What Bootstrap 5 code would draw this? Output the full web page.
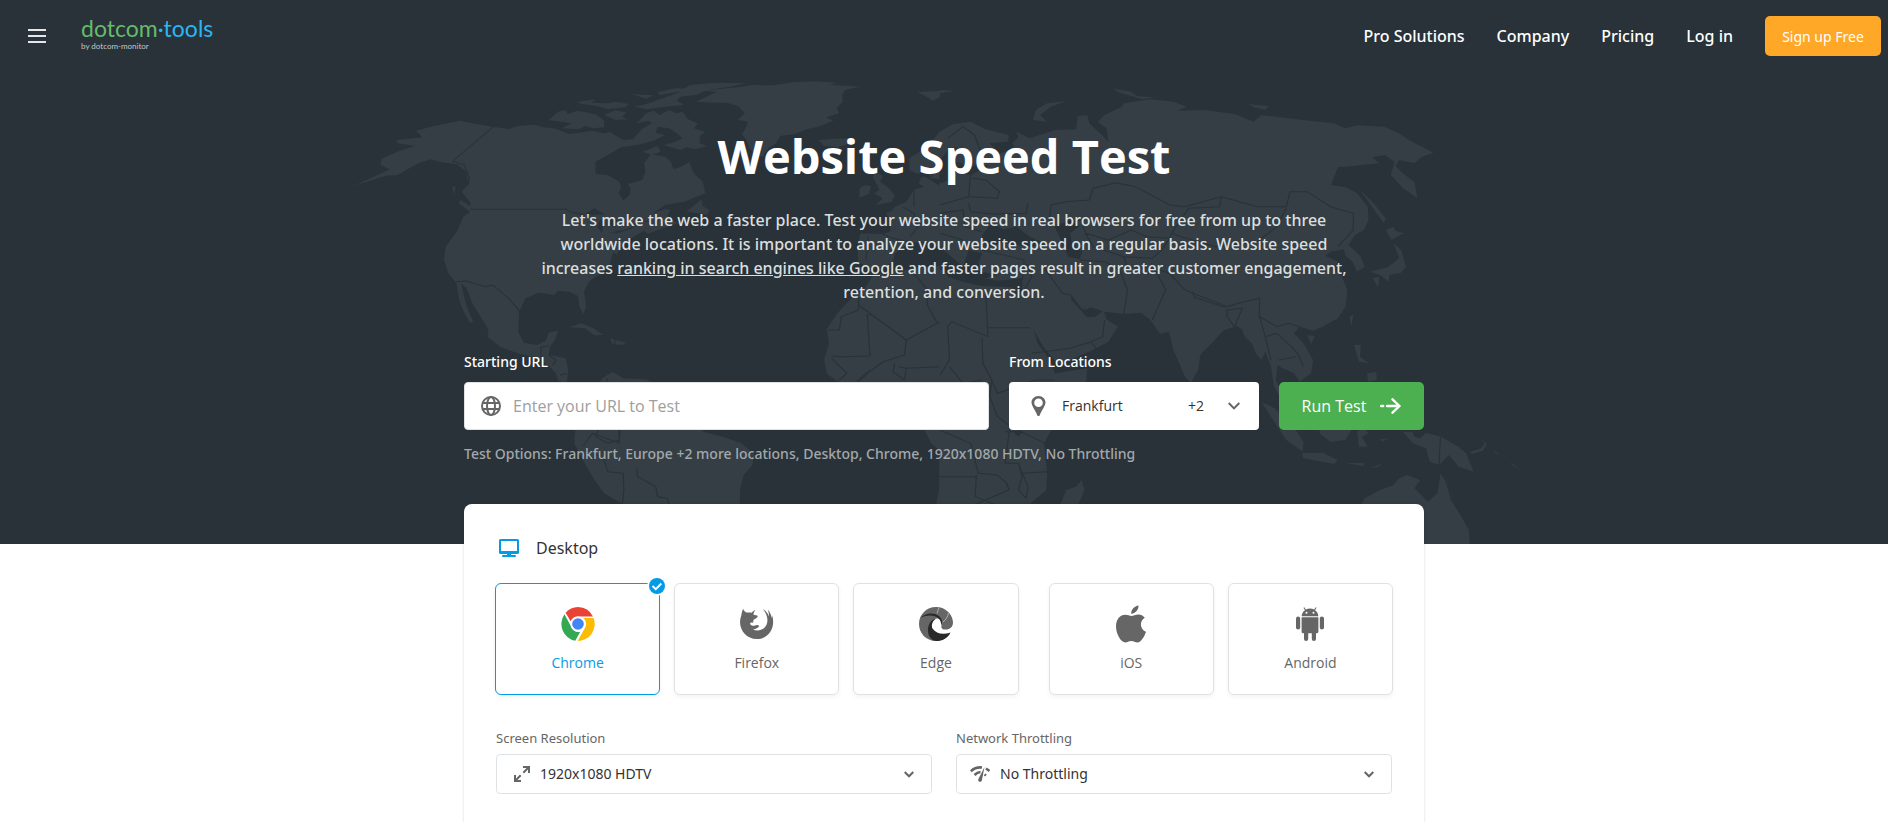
<!DOCTYPE html>
<html lang="en">
<head>
<meta charset="utf-8">
<meta name="viewport" content="width=device-width, initial-scale=1">
<title>Website Speed Test</title>
<link rel="stylesheet" href="https://cdn.jsdelivr.net/npm/bootstrap@5.3.0/dist/css/bootstrap.min.css">
<style>
  :root { --ink: #283238; --land: #343e44; --blue: #039be5; --grey: #666; --line: #dfe2e4; }
  body { font-family: "Open Sans", "Noto Sans", sans-serif; font-size: 14px; line-height: 20px; color: #333; background: #fff; overflow-x: hidden; }
  .topbar, .intro, .field-label, .summary, .panel h2, .opts { font-family: "Noto Sans", "Open Sans", sans-serif; }
  .topbar .nav-link, .intro, .field-label, .summary { font-weight: 500; }
  .hero { background: var(--ink); padding-bottom: 80px; }
  .world { width: 100%; height: 100%; pointer-events: none; }
  .world .land { fill: var(--land); }
  .world .sea { fill: var(--ink); }
  .world .frontier { fill: none; stroke: var(--ink); stroke-width: 3; stroke-linejoin: round; }
  .topbar { padding: 16px 7px 16px 28px; height: 72px; }
  .menu-btn { width: 18px; line-height: 0; color: #e4e6e7; }
  .brand { margin-left: 35px; padding-bottom: 4px; line-height: 24px; font-family: Lato, sans-serif; font-size: 23px; color: #66bb6a; }
  .brand .tools { color: #29b6f6; }
  .brand small { display: block; font-size: 8px; line-height: 12px; color: #c3c7c9; }
  .topbar .nav-link { color: #fff; font-size: 16px; padding: 0; }
  .btn-signup { background: #ffa726; color: #fff; font-size: 14px; height: 40px; width: 116px; padding: 0; border-radius: 5px; }
  .page-col { width: 960px; max-width: 100%; margin: 0 auto; }
  .hero h1 { color: #fff; font-size: 47px; line-height: 64px; font-weight: 700; margin: 52px 0 20px; }
  .intro { max-width: 820px; margin: 0 auto; font-size: 16px; line-height: 24px; color: #dcdedf; }
  .intro a { color: inherit; }
  .field-label { color: #fff; font-size: 14px; line-height: 20px; margin-bottom: 10px; }
  .url-form { margin-top: 48px; column-gap: 20px; }
  .url-box { height: 48px; border: 1px solid var(--line); border-radius: 4px; background: #fff; padding: 0 16px; gap: 12px; }
  .url-box input { border: 0; outline: 0; font-size: 16px; color: #333; min-width: 0; background: transparent; padding: 0; }
  .url-box input::placeholder { color: #9e9e9e; opacity: 1; }
  .loc-col { width: 250px; }
  .loc-btn { height: 48px; border: 0; border-radius: 4px; background: #fff; color: #333; padding: 0 19px 0 22px; }
  .run-btn { width: 145px; height: 48px; background: #4caf50; color: #fff; border: 0; border-radius: 5px; font-size: 16px; gap: 14px; padding: 0; }
  .summary { color: #a3a8ab; font-size: 14px; line-height: 20px; margin: 14px 0 0; }
  .panel { margin-top: -40px; position: relative; background: #fff; border-radius: 8px; padding: 31px; box-shadow: 0 0 3px rgba(40,50,56,.18); min-height: 340px; }
  .panel h2 { font-size: 16px; line-height: 26px; margin: 0; color: #333; font-weight: 400; gap: 17px; }
  .tiles { margin-top: 22px; gap: 14px; }
  .tile { height: 112px; border: 1px solid var(--line); border-radius: 6px; box-shadow: 0 2px 4px rgba(40,50,56,.06); color: var(--grey); gap: 11px; padding-top: 1px; cursor: pointer; background: #fff; }
  .tile .icon { height: 36px; }
  .tile .tick { display: none; position: absolute; width: 20px; height: 20px; top: -8px; right: -8px; }
  .btn-check:checked + .tile { border-color: var(--blue); color: var(--blue); }
  .btn-check:checked + .tile .tick { display: block; }
  .mobile { margin-left: 16px; }
  .opts { margin-top: 33px; gap: 24px; padding: 0 1px; }
  .opts label { font-size: 13px; line-height: 20px; color: var(--grey); margin-bottom: 6px; }
  .pick { height: 40px; border: 1px solid var(--line); border-radius: 4px; padding: 0 13px; gap: 10px; }
  .pick select { appearance: none; border: 0; outline: 0; background: transparent; color: #333; font-size: 14px; padding: 0; }
</style>
</head>
<body>
<header class="hero position-relative">
  <svg class="world position-absolute top-0 start-0" viewBox="0 0 1888 544" preserveAspectRatio="xMidYMin slice" aria-hidden="true">
    <!-- Western half -->
    <g transform="translate(340 60) scale(.38265 .33333)">
      <path class="land" d="M930 125L985 95 940 92 1040 82 1080 75 1130 76 1190 66 1240 64 1300 68 1280 74 1360 80 1320 90 1312 105 1314 125 1298 145 1305 160 1270 172 1290 182 1250 200 1220 208 1190 222 1150 228 1140 250 1120 265 1105 290 1085 285 1070 265 1062 240 1050 222 1060 205 1066 185 1040 180 1058 160 1040 138 1010 128 970 128Z"/>
      <path class="land" d="M1250 240L1290 236 1330 235 1335 250 1300 262 1265 258ZM1508 96L1568 92V112L1550 122 1530 108Z"/>
      <path class="land" d="M35 378L85 352 130 328 105 315 110 295 150 275 195 258 150 250 148 240 215 232 198 212 245 198 280 190 315 182 345 190 400 200 440 207 465 198 510 194 530 202 560 205 600 222 660 212 690 220 705 216 740 240 765 238 790 206 815 190 832 196 825 218 850 225 820 242 780 254 735 262 700 285 668 305 668 342 700 345 730 365 735 380 728 400 740 420 755 408 760 388 752 372 790 360 798 335 795 308 812 283 850 290 865 305 872 328 895 318 912 306 925 340 948 365 955 400 900 425 850 435 815 462 850 446 864 450 855 468 880 488 902 484 850 502 805 522 795 512 760 535 735 560 722 585 715 575 705 612 680 642 650 665 638 695 643 740 636 763 625 738 622 708 600 695 570 692 560 705 520 698 485 715 468 755 466 815 480 848 515 855 538 842 545 818 570 812 562 840 548 862 546 885 590 895 597 930 592 970 570 962 565 940 545 918 520 895 470 882 420 862 385 830 388 810 365 765 348 735 330 685 316 670 330 735 348 785 340 790 325 760 312 722 304 670 283 640 272 600 276 560 305 515 322 470 340 455 310 430 315 420 340 438 342 430 318 395 335 372 330 335 305 312 270 308 238 298 205 310 150 345 120 347Z"/>
      <path class="land" d="M545 180L570 155 590 150 595 162 620 152 650 158 670 165 690 180 690 202 660 205 640 198 625 208 580 205 605 190ZM560 165L545 175M620 125L670 118 655 128 700 130 720 125 755 132 745 142 700 148 670 138 630 132ZM690 165L720 150 750 158 735 170 755 178 720 180ZM768 140L800 132 835 118 880 100 915 75 980 68 1060 70 1020 80 960 90 930 105 890 110 880 122 900 135 840 142 800 148ZM830 96L880 84 910 88 870 98 835 106ZM760 102L820 106 800 116ZM775 190L800 160 820 152 835 165 860 150 880 160 895 155 910 178 935 190 925 205 955 215 940 228 940 250 960 258 930 268 905 262 890 270 845 255 870 248 895 235 880 220 860 205 830 200 805 182ZM790 275L830 258 838 275 815 285ZM905 455L945 418 948 438 966 450 960 465 935 460Z"/>
      <path class="land" d="M598 802L630 790 660 803 688 825 665 826 640 805ZM705 835L748 848 738 855 712 852ZM652 852L670 855M765 852L778 856M95 268L105 272M82 310L96 305ZM293 382L302 378 298 405Z"/>
      <path class="land" d="M670 985L685 955 712 935 740 955 800 958 850 990 900 1060 950 1115 1000 1130 1050 1150 1083 1185 1078 1215 1055 1245 1045 1290 1045 1335V1360H745L735 1330 690 1300 665 1260 630 1190 612 1150 615 1110 640 1060Z"/>
      <path class="land" d="M1357 385L1372 375 1388 378 1382 402 1358 413ZM1392 350L1402 335 1418 348 1412 365 1430 380 1450 405 1443 425 1400 436 1418 415 1396 400 1410 390Z"/>
      <path class="land" d="M1568 212L1545 248 1515 275 1488 295 1488 330 1510 343 1530 325 1545 355 1568 358V378L1530 350 1520 350 1512 370 1525 380 1500 390 1480 425 1450 440 1440 455 1425 458 1440 480 1438 515 1418 522 1360 520 1352 560 1355 608 1385 622 1420 622 1445 605 1450 580 1485 550 1500 548 1540 545 1568 565ZM1568 618L1500 625 1440 640 1395 640 1370 690 1340 710 1300 760 1272 808 1278 850 1265 900 1272 940 1300 965 1340 1010 1400 1030 1480 1020 1520 1050 1530 1115 1545 1150 1568 1172Z M1568 1270L1558 1332H1568Z"/>
      <path class="sea" d="M640 462L665 445 690 462 660 465ZM672 500L680 480 690 475 685 520ZM700 475L725 480 720 500 705 495ZM700 520L735 510 730 516Z"/>
      <path class="frontier" d="M403 198L295 303 325 315 338 355 335 375M340 448H592L600 455 640 465M720 520L760 505 780 482 810 485M303 665L330 663 380 680 400 675 430 705 445 720 472 757M525 890L525 862 545 858M545 885L565 900 555 915M592 940L575 945M718 835V855M700 955L690 985 735 1010 730 1150 660 1120 635 1158M675 1110L668 1130 700 1150 730 1140 728 1112M665 1180L690 1200 700 1235 740 1240 742 1290 738 1332M775 1225L778 1250 825 1280 830 1310 855 1315 860 1332M1275 810H1305L1310 770 1355 750V710M1355 735L1480 840 1568 785M1378 765L1385 888 1310 890 1285 888M1375 765H1392M1480 840L1475 885 1420 905 1390 930 1355 965M1285 895L1325 940 1300 965M1450 910L1445 935 1475 960 1480 925 1568 920M1480 925L1460 920M1350 965L1385 930M1535 735V690L1500 640M1535 735L1560 788M1418 522L1445 535 1500 548M1380 530L1375 600M1470 440L1500 460 1510 500 1490 530M1500 390L1500 440M1545 350L1568 310"/>
    </g>
    <!-- Eastern half -->
    <g transform="translate(940 60) scale(.38265 .33333)">
      <path class="land" d="M-2 215L35 192 80 185 120 208 180 225 178 245 130 250 155 282 195 262 188 250 205 232 198 215 235 235 300 210 355 208 360 168 385 165 390 190 428 230 440 245 435 205 412 185 430 165 475 140 480 130 550 118 610 125 645 140 620 152 690 150 770 162 820 185 840 165 950 180 1030 190 1060 205 1090 196 1160 200 1200 220 1225 240 1262 262 1290 278 1260 290 1240 310 1200 300 1190 318 1215 345 1240 365 1248 415 1210 385 1178 345 1188 305 1162 285 1130 292 1148 310 1080 318 1040 322 1022 375 1060 382 1090 400 1118 440 1120 480 1108 510 1085 525 1068 555 1100 590 1110 620 1090 635 1078 605 1060 588 1055 568 1020 575 1008 588 1042 605 1025 625 1050 650 1065 690 1060 740 1040 775 1000 800 975 812 940 800 925 820 950 850 975 900 970 940 940 965 925 940 895 925 882 915 878 960 898 1010 930 1050 900 1040 872 975 865 920 850 875 840 900 825 880 815 850 795 828 790 808 775 798 740 812 710 850 680 885 675 930 655 968 640 950 610 870 598 815 575 822 550 780 525 758 480 762 430 755 395 742 375 752 340 700 345 722 385 772 405 770 428 752 435 778 465 800 440 845 400 870 340 900 305 915 295 895 270 860 240 800 205 740 200 720 215 690 215 655 150 662 115 655 100 610 110 580 75 570 60 620 30 590 0 560 -2 560Z"/>
      <path class="land" d="M-2 632L10 622 20 650 60 665 110 678 190 682 205 720 240 790 255 850 290 905 300 940 385 925 382 965 340 1040 290 1112 272 1150 280 1240 278 1290 235 1332V1350H-2Z"/>
      <path class="land" d="M315 1332L330 1290 355 1280 370 1260 378 1290 362 1332ZM243 180L250 150 280 130 330 123 290 140 262 165 280 185ZM450 85L500 95 515 108 560 112 530 118 470 98ZM805 132L860 138 850 150 820 142ZM0 90L40 92 0 100ZM165 88L190 87M1095 388L1130 425 1165 475 1160 490 1110 410ZM1165 510L1185 500 1190 512 1212 520 1180 540ZM1185 550L1205 570 1218 620 1205 638 1175 645 1172 665 1150 645 1125 635 1170 622 1200 595ZM1130 655L1148 650 1145 680ZM1070 770L1080 765 1075 800ZM960 825L980 828 970 852ZM1082 855L1100 855 1098 890 1120 910 1095 905ZM1115 940L1140 935 1142 960 1120 965ZM840 1025L875 1045 930 1110 950 1145 948 1175 905 1140 870 1080ZM945 1180L1000 1178 1040 1200 1030 1212 950 1195ZM990 1080L1080 1060 1075 1110 1060 1140 1020 1145 992 1120ZM1090 1115L1105 1100 1120 1120 1102 1130 1118 1160 1095 1160ZM1060 1210L1110 1208 1105 1218ZM1125 1225L1155 1210 1145 1222ZM1150 1138L1175 1135 1155 1145ZM1210 1115L1235 1115 1240 1130 1255 1135 1270 1118 1310 1130 1355 1160 1375 1180 1395 1235 1355 1220 1330 1185 1305 1215 1280 1205 1270 1165 1235 1150ZM1385 1175L1412 1166 1424 1150 1410 1132 1430 1152 1418 1172 1390 1182ZM1445 1163L1460 1185 1452 1180ZM1490 1205L1512 1225 1498 1218Z"/>
      <path class="land" d="M1095 1345L1110 1315 1150 1290 1185 1275 1200 1255 1220 1245 1255 1260 1240 1285 1275 1325 1300 1300 1308 1240 1322 1265 1335 1320 1360 1365 1382 1410 1385 1456H1100Z"/>
      <path class="sea" d="M110 525L135 490 165 508 200 500 235 530 280 555 230 560 165 548 120 560ZM300 500L340 480 365 498 340 520 345 550 372 575 365 598 335 590 320 550ZM0 300L25 265 45 262 35 300 70 318 130 315 80 345 40 335 30 360 -2 370ZM0 575L25 590 60 635 20 640ZM80 645L110 635 150 645 110 658ZM20 600L45 610 55 640ZM375 735L380 760 376 768ZM1030 375L1040 380ZM190 1112L215 1115 205 1130Z"/>
      <path class="frontier" d="M20 235L60 200 90 225 110 285 95 320M80 345L75 410 0 435M75 410L150 415 155 395 120 360 85 355M75 430L80 455 140 462 225 460 230 430M0 460L60 450 65 500 110 515M0 520L60 540M110 570L220 600 215 660M285 490L290 435 330 425 390 420 400 385 460 368 510 380 560 410 600 435 640 440 735 410 830 440 905 440 915 395 960 395 1020 440 1080 460 1080 510 1040 560M735 412L730 440 650 445 605 520 600 535 540 530 500 510 440 540 380 520 370 480 305 495M605 520L630 530 720 560 830 545 880 500 905 445M380 520L400 560 480 590 555 595 580 570 600 535M480 590L490 620 560 625 600 640M365 600L430 605 470 630 490 690 480 762M270 620L320 700 340 705M225 610L240 650 205 720M560 625L590 690 570 740 555 780M600 640L640 690 750 740 780 730 835 715 835 770 880 800 910 790 940 800M660 695L665 712 745 742M750 750L790 745 770 800 750 770ZM835 770L850 830 880 820 900 840 935 880 950 920M850 830L865 900M885 900L930 890M240 880L340 865 395 845 425 830 430 780M395 845L410 870M120 700L125 830M122 803H235M125 830L30 785 20 800 25 900 0 945M110 835L112 910 135 960 150 1000 250 960 300 960M25 920L60 970 110 960M135 960L130 1010 150 1070 185 1100 275 1150M0 1110L80 1150 100 1240 150 1245 175 1270 180 1290 95 1332M185 1080L170 1210 205 1210 215 1240 280 1235M205 1210L215 1250 205 1290 225 1315 230 1280 215 1240M95 1245L92 1310 140 1332M0 1250L95 1250M170 1115H200M1308 1130L1304 1215"/>
    </g>
  </svg>

  <nav class="topbar d-flex align-items-center position-relative">
    <button type="button" class="menu-btn btn border-0 p-0" aria-label="Menu">
      <svg width="18" height="14" viewBox="0 0 18 14" fill="none" stroke="currentColor" stroke-width="2"><path d="M0 1h18M0 7h18M0 13h18"/></svg>
    </button>
    <a class="brand text-decoration-none" href="#">dotcom<span class="tools">·tools</span><small>by dotcom-monitor</small></a>
    <div class="nav ms-auto align-items-center gap-4">
      <a class="nav-link" href="#">Pro Solutions</a>
      <a class="nav-link ms-2" href="#">Company</a>
      <a class="nav-link ms-2" href="#">Pricing</a>
      <a class="nav-link ms-2" href="#">Log in</a>
      <button type="button" class="btn btn-signup ms-2">Sign up Free</button>
    </div>
  </nav>

  <div class="page-col position-relative">
    <h1 class="text-center">Website Speed Test</h1>
    <p class="intro text-center">Let's make the web a faster place. Test your website speed in real browsers for free from up to three worldwide locations. It is important to analyze your website speed on a regular basis. Website speed increases <a href="#">ranking in search engines like Google</a> and faster pages result in greater customer engagement, retention, and conversion.</p>

    <form class="url-form d-flex align-items-end">
      <div class="flex-grow-1">
        <label class="field-label d-block" for="url">Starting URL</label>
        <div class="url-box d-flex align-items-center">
          <svg width="20" height="20" viewBox="0 0 20 20" fill="none" stroke="#666" stroke-width="2"><circle cx="10" cy="10" r="9"/><ellipse cx="10" cy="10" rx="4" ry="9"/><path d="M1.500 7h17M1.500 13h17"/></svg>
          <input class="flex-grow-1" id="url" type="text" placeholder="Enter your URL to Test">
        </div>
      </div>
      <div class="loc-col">
        <label class="field-label d-block" for="locations">From Locations</label>
        <button type="button" id="locations" class="loc-btn d-flex align-items-center w-100">
          <svg width="15" height="20" viewBox="0 0 15 20" fill="#666" fill-rule="evenodd"><path d="M7.500 0C3.300 0 .5 3 .5 6.500c0 3.500 4.200 8 5.600 12.500.3 1.300 2.500 1.300 2.800 0 1.400-4.500 5.600-9 5.600-12.500C14.500 3 11.700 0 7.500 0zm0 2.400a4.300 4.300 0 1 1 0 8.600 4.300 4.300 0 0 1 0-8.600z"/></svg>
          <span class="ms-3">Frankfurt</span>
          <span class="ms-auto me-4">+2</span>
          <svg width="12" height="8" viewBox="0 0 12 8" fill="none" stroke="#666" stroke-width="2"><path d="M.7 1L6 6.400 11.300 1"/></svg>
        </button>
      </div>
      <button type="submit" class="run-btn d-flex align-items-center justify-content-center">Run Test
        <svg width="21" height="16" viewBox="0 0 21 16" fill="none" stroke="#fff" stroke-width="2.400" stroke-linecap="round" stroke-linejoin="round"><path d="M1.200 8h2M7 8h12.500M12.500 1.300L19.500 8l-7 6.700"/></svg>
      </button>
    </form>
    <p class="summary">Test Options: Frankfurt, Europe +2 more locations, Desktop, Chrome, 1920x1080 HDTV, No Throttling</p>
  </div>
</header>

<main class="page-col">
  <section class="panel">
    <h2 class="d-flex align-items-center">
      <svg class="ms-1" width="20" height="18" viewBox="0 0 20 18"><path fill="#039be5" fill-rule="evenodd" d="M1.500 0h17A1.500 1.500 0 0 1 20 1.500v12a1.500 1.500 0 0 1-1.500 1.500H12v1h4a1 1 0 0 1 0 2H4a1 1 0 0 1 0-2h4v-1H1.500A1.500 1.500 0 0 1 0 13.500v-12A1.500 1.500 0 0 1 1.500 0zM2 2v10h16V2z"/></svg>
      Desktop
    </h2>
    <div class="tiles d-flex" role="radiogroup" aria-label="Browser">
      <div class="flex-fill w-100">
        <input class="btn-check" type="radio" name="browser" id="chrome" checked>
        <label class="tile position-relative d-flex flex-column align-items-center justify-content-center" for="chrome">
          <svg class="icon" width="34" viewBox="0 0 34 36"><path fill="#ea4335" d="M17 1a17 17 0 0 1 15 9.500H17a8 8 0 0 0-7.400 4.800L4.600 6.800A17 17 0 0 1 17 1z"/><path fill="#fbbc05" d="M32.600 12a17 17 0 0 1-16 23l7.200-12.700a8 8 0 0 0-1.300-10.300z"/><path fill="#34a853" d="M3.500 8.300l6 11.200a8 8 0 0 0 9.700 6.200L14.300 34.800A17 17 0 0 1 3.500 8.300z"/><circle cx="17" cy="18" r="7.500" fill="#fff"/><circle cx="17" cy="18" r="5.800" fill="#4285f4"/></svg>
          <span>Chrome</span>
          <svg class="tick" viewBox="0 0 20 20"><circle cx="10" cy="10" r="10" fill="#fff"/><circle cx="10" cy="10" r="8" fill="#039be5"/><path d="M5.500 10l3.300 3.200 5.500-5.700" fill="none" stroke="#fff" stroke-width="2"/></svg>
        </label>
      </div>
      <div class="flex-fill w-100">
        <input class="btn-check" type="radio" name="browser" id="firefox">
        <label class="tile d-flex flex-column align-items-center justify-content-center" for="firefox">
          <svg class="icon" width="34" viewBox="0 0 34 36" fill="#666"><path d="M3.200 3c.8 1.700 1.800 3 3.300 3.500 2-.2 3.500-.2 5 .3 1-1.200 2.500-2.300 4-2.600-1.300 1.300-2 2.800-2 4.600 1.500.5 3.700.6 4.300 1.200-.3 1.800-2.500 2.800-4.200 3.700-.6 1 0 2-.6 3-1.500-.5-2.600-.2-3 1.200 1.500 1.500 3 2.500 5 1.600 1.500-.7 3.300-.8 4.300.5-1.200 2-3.300 3-6.300 3.400 6 3 13.300-.5 14.300-7.400.6-5-1-8.500-4.300-13 3 2 5 4.500 5.900 7.500.2-2.500-.2-4.800-1.200-7 2.400 2.700 3.600 5.500 4 8.500.4-1 .4-2 .3-3C36 20 29.500 33 17 33 4 33-3 20 1.300 9.500 1.600 7.500 2 5 3.200 3z"/></svg>
          <span>Firefox</span>
        </label>
      </div>
      <div class="flex-fill w-100">
        <input class="btn-check" type="radio" name="browser" id="edge">
        <label class="tile d-flex flex-column align-items-center justify-content-center" for="edge">
          <svg class="icon" width="34" viewBox="0 0 34 36"><path fill="#666" d="M17 1c10 0 17 8 17 15.500 0 5-4 7.500-8 7-3 0-4.500-2-3.200-4.500C24.300 15 21.500 12.500 17 12.500c-6 .5-8 8-5 12.500 3 5 11 6 19 2.500C27.500 33 22.500 35 17 35 7 35 0 27 0 18 0 8.500 7.500 1 17 1z"/><path fill="#292929" d="M31.500 26.500C28.500 32.500 23 35 17 35 9.500 34 6.500 24 11 16.500c1.500-2.500 4-4 6.500-4-4 2-5.500 6.500-4 10 3.500 5.500 11 6.500 18 4zM1.500 12C6 6.500 16 6 20.500 10.500c3 3 3.200 6.500 2 9-.5-4.500-2-7.500-6-9C12 8.500 5 9.500 1.500 12z"/><path fill="none" stroke="#ddd" stroke-width=".6" d="M18 7.500l2-6M24 16c3-2.500 5-5.500 5.500-9"/></svg>
          <span>Edge</span>
        </label>
      </div>
      <div class="flex-fill w-100 mobile">
        <input class="btn-check" type="radio" name="browser" id="ios">
        <label class="tile d-flex flex-column align-items-center justify-content-center" for="ios">
          <svg class="icon overflow-visible" width="30" viewBox="0 0 30 36" fill="#666"><path d="M22.500-.5c.3 4-3 8-7.300 8.200C15 3.500 18.500 0 22.500-.5zM15.500 10c2 0 4-1.500 6.800-1.500 2.500 0 5 1.200 6.500 3.300-5.800 3.500-4.800 11.700 1.200 14C28.500 30.500 25 36.500 21.500 36.500c-2.500 0-3.500-1.500-6.200-1.500s-4 1.500-6 1.500C5 36.500 0 28 0 20.500 0 13 4.500 8.800 9 8.800c2.700 0 4.700 1.200 6.500 1.200z"/></svg>
          <span>iOS</span>
        </label>
      </div>
      <div class="flex-fill w-100">
        <input class="btn-check" type="radio" name="browser" id="android">
        <label class="tile d-flex flex-column align-items-center justify-content-center" for="android">
          <svg class="icon" width="28" viewBox="0 0 28 36" fill="#666"><path fill-rule="evenodd" d="M8.300 1.300l1.500 2.300a9 9 0 0 1 8.400 0l1.500-2.300.8.500-1.500 2.400c2 1.300 3.200 3.400 3.400 6H5.600c.2-2.600 1.400-4.700 3.400-6L7.500 1.800zM10.500 5.800a1 1 0 1 0 0 2 1 1 0 0 0 0-2zm7 0a1 1 0 1 0 0 2 1 1 0 0 0 0-2z"/><path d="M5.600 11.200h16.800v14.600c0 .8-.5 1.400-1.300 1.400H20V33a2 2 0 0 1-4.200 0v-5.800h-3.600V33A2 2 0 0 1 8 33v-5.800H6.900c-.8 0-1.300-.6-1.300-1.400z"/><rect y="10.500" width="4.200" height="13" rx="2.100"/><rect x="23.800" y="10.500" width="4.200" height="13" rx="2.100"/></svg>
          <span>Android</span>
        </label>
      </div>
    </div>

    <div class="opts d-flex">
      <div class="w-100">
        <label class="d-block" for="resolution">Screen Resolution</label>
        <div class="pick d-flex align-items-center">
          <svg class="ms-1 flex-shrink-0" width="16" height="16" viewBox="0 0 16 16" fill="none" stroke="#666" stroke-width="2"><path d="M9 1h6v6M14.500 1.500L9.300 6.700M1 9v6h6M1.500 14.500l5.200-5.200"/></svg>
          <select id="resolution" class="flex-grow-1"><option>1920x1080 HDTV</option></select>
          <svg class="me-1" width="10" height="7" viewBox="0 0 10 7" fill="none" stroke="#666" stroke-width="2"><path d="M.7 1L5 5.300 9.300 1"/></svg>
        </div>
      </div>
      <div class="w-100">
        <label class="d-block" for="throttling">Network Throttling</label>
        <div class="pick d-flex align-items-center">
          <svg class="flex-shrink-0" width="20" height="16" viewBox="0 0 20 16"><path fill="none" stroke="#666" stroke-width="2.600" d="M.8 5.200C4 2.300 7.500 1 12 1.500M4.500 9C6.500 7 8 6.200 10.500 6M16 2.500l3.500 2.500M14.500 8.500l1.500 1"/><path fill="#666" d="M14.500 1l-2.600 13.200c-.5 2.500-4.200 2-3.700-.6z"/></svg>
          <select id="throttling" class="flex-grow-1"><option>No Throttling</option></select>
          <svg class="me-1" width="10" height="7" viewBox="0 0 10 7" fill="none" stroke="#666" stroke-width="2"><path d="M.7 1L5 5.300 9.300 1"/></svg>
        </div>
      </div>
    </div>
  </section>
</main>
<script src="https://cdn.jsdelivr.net/npm/bootstrap@5.3.0/dist/js/bootstrap.bundle.min.js"></script>
</body>
</html>
